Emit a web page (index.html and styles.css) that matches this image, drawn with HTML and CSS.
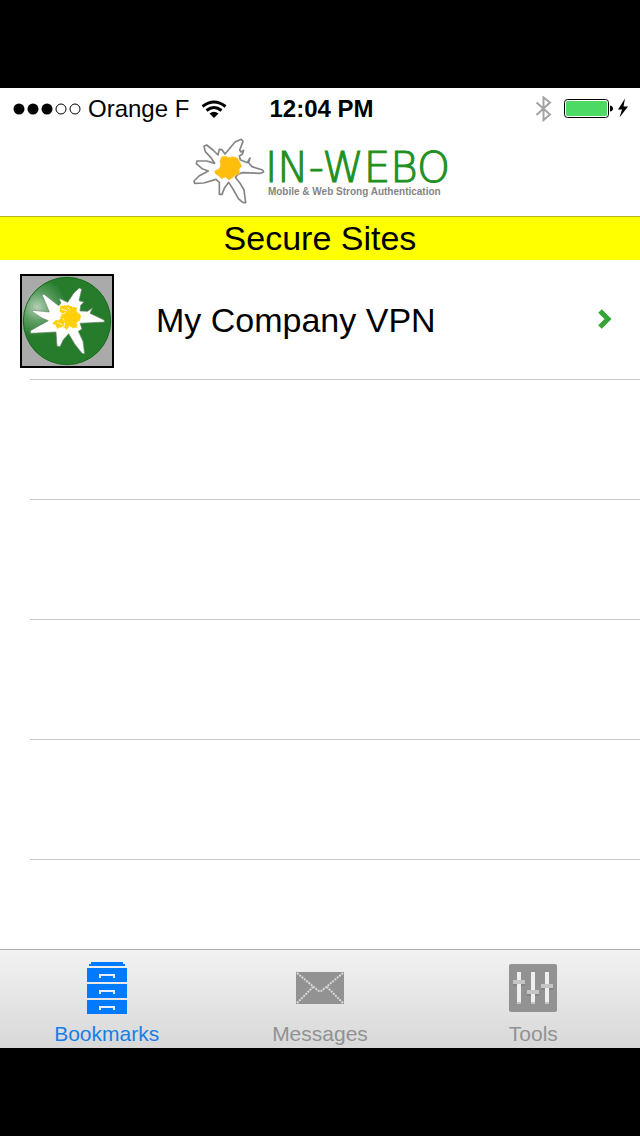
FILE: index.html
```html
<!DOCTYPE html>
<html lang="en">
<head>
<meta charset="utf-8">
<meta name="viewport" content="width=device-width">
<title>In-Webo Secure Sites</title>
<link rel="stylesheet" href="styles.css">
</head>
<body>
<div class="screen">
  <div class="status">
    <div class="carrier">
      <svg width="68" height="12" viewBox="0 0 68 12" aria-hidden="true">
        <circle cx="6" cy="6" r="5.5"/><circle cx="20" cy="6" r="5.5"/><circle cx="34" cy="6" r="5.5"/>
        <g fill="none" stroke="#000"><circle cx="48" cy="6" r="5"/><circle cx="62" cy="6" r="5"/></g>
      </svg>
      <span>Orange F</span>
      <svg class="wifi" width="26" height="20" viewBox="0 0 26 20" aria-hidden="true">
        <g fill="none" stroke="#000" stroke-width="3"><path d="M1.5 7.5Q13-1.5 24.5 7.5"/><path d="M5.5 11.5Q13 5.5 20.5 11.5"/></g>
        <path d="M8.5 14.5Q13 11 17.5 14.5L13 19Z"/>
      </svg>
    </div>
    <time class="clock">12:04 PM</time>
    <div class="power">
      <svg width="96" height="28" viewBox="534 95 96 28" aria-hidden="true">
        <path d="M536.5 102.500L550 114.500L543.5 120V97.500L550 102.500L536.5 115" fill="none" stroke="#a3a3a3" stroke-width="2"/>
        <rect x="564.500" y="99.500" width="44" height="18" rx="3" fill="#fff" stroke="#000"/>
        <rect x="566" y="101" width="41" height="15" rx="1.500" fill="#4cd964"/>
        <path d="M610 105.500Q613 106 613 108.500T610 111.500Z"/>
        <path d="M625 98.500L618 109.500H622L619.500 117.500L628 106.500H623.500Z"/>
      </svg>
    </div>
  </div>

  <header class="brand">
    <svg width="75" height="70" viewBox="15 18 225 210" aria-hidden="true">
      <path d="M99 75L103 58L111 59L120 72L130 60L150 36L169 28L174 34L164 60L168 66L176 61L172 73L163 78L166 89L187 98L195 84L191 98L201 110L233 120L236 126L227 130L174 128L160 132L151 142L164 158L177 180L182 218L173 217L160 206L144 177L131 157L119 173L111 193L103 193L103 157L93 148L56 159L29 160L27 153L42 138L70 123L51 116L34 101L36 93L65 93L89 100L77 82L61 65L57 49L65 45L84 60Z" fill="#fff" stroke="#858585" stroke-width="5" stroke-linejoin="round"/>
      <path d="M110 80L124 79L130 83L145 80L158 85L164 96L170 108L162 118L164 130L151 136L142 143L132 150L121 141L109 146L102 138L91 131L89 123L102 117L107 108L105 94Z" fill="#ffbd0c" stroke="#ffc83c" stroke-width="3" stroke-dasharray="5 2"/>
    </svg>
    <div class="brand-text">
      <span class="wordmark">IN-WEBO</span>
      <span class="tagline">Mobile &amp; Web Strong Authentication</span>
    </div>
  </header>

  <main class="content">
    <h1 class="title">Secure Sites</h1>
    <ul class="sites">
      <li class="row">
        <a class="site" href="#vpn">
          <svg class="badge" width="90" height="90" viewBox="66 48 270 270" aria-hidden="true">
            <defs>
              <radialGradient id="shine" cx=".16" cy=".34" r=".34">
                <stop offset="0" stop-color="#b4d0b5"/><stop offset=".5" stop-color="#5c9d62"/><stop offset="1" stop-color="#277c2c"/>
              </radialGradient>
            </defs>
            <circle cx="201" cy="183" r="131" fill="url(#shine)" stroke="#146a19" stroke-width="3"/>
            <path d="M177 115L190 121L203 127L222 98L238 84L245 88L237 122L252 126L242 136L240 153L263 154L278 143L270 160L312 180L314 186L240 190L246 207L235 214L249 244L254 282L246 280L224 252L206 221L190 239L180 260L171 258L168 216L92 220L91 212L145 182L126 174L97 155L100 151L148 156L126 104L132 103L176 137L183 130Z" fill="#fff" stroke="#66866a" stroke-width="2" stroke-linejoin="round"/>
            <path d="M181 139L205 136L218 142L230 143L229 155L242 166L239 181L229 187L231 202L218 203L207 196L201 209L189 199L171 205L169 195L158 191L166 182L180 180L186 161L180 154Z" fill="#ffcf08" stroke="#ffd21c" stroke-width="3" stroke-dasharray="7 3"/>
            <path d="M184 147L202 153M181 164L197 158M171 187L187 194M191 203L195 187M202 142L211 151M188 174L193 181" stroke="#fff7cb" stroke-width="3"/>
          </svg>
          <span class="name">My Company VPN</span>
          <svg class="chevron" width="14" height="20" viewBox="0 0 14 20" aria-hidden="true"><path d="M2 2L10 10L2 18" fill="none" stroke="#36a336" stroke-width="5"/></svg>
        </a>
      </li>
      <li class="row"></li>
      <li class="row"></li>
      <li class="row"></li>
      <li class="row"></li>
    </ul>
  </main>

  <nav class="tabs">
    <button class="tab active" type="button">
      <svg width="40" height="52" viewBox="0 0 40 52" aria-hidden="true">
        <path d="M4 0H36V2H38V4H2V2H4ZM0 6H40V20H0ZM0 22H40V36H0ZM0 38H40V52H0Z" fill="#007aff"/>
        <path d="M13 16V13H27V16M13 32V29H27V32M13 48V45H27V48" fill="none" stroke="#e8eef5" stroke-width="2"/>
      </svg>
      <span>Bookmarks</span>
    </button>
    <button class="tab" type="button">
      <svg width="48" height="52" viewBox="0 0 48 52" aria-hidden="true">
        <rect y="10" width="48" height="32" fill="#929292"/>
        <path d="M1 11L22 28.500Q24 30 26 28.500L47 11M1 41L17 25M47 41L31 25" fill="none" stroke="#d9d9d9" stroke-width="2" stroke-dasharray="2 1"/>
      </svg>
      <span>Messages</span>
    </button>
    <button class="tab" type="button">
      <svg width="48" height="52" viewBox="0 0 48 52" aria-hidden="true">
        <rect y="2" width="48" height="48" rx="2" fill="#929292"/>
        <path d="M8 10H12V40H8ZM22 10H26V40H22ZM36 10H40V40H36Z" fill="#efefef"/>
        <path d="M4 18H16V22H4ZM18 28H30V32H18ZM32 22H44V26H32ZM8 40H12V42H8ZM22 40H26V42H22ZM36 40H40V42H36Z" fill="#c5c5c5"/>
        <path d="M4 22H8V24H4ZM12 22H16V24H12ZM18 32H22V34H18ZM26 32H30V34H26ZM32 26H36V28H32ZM40 26H44V28H40Z" fill="#858585"/>
      </svg>
      <span>Tools</span>
    </button>
  </nav>
</div>
</body>
</html>
```
FILE: styles.css
```css
* {
  box-sizing: border-box;
}

body {
  margin: 0;
  padding: 88px 0;
  background: #000;
  color: #000;
  font-family: "Liberation Sans", Arial, sans-serif;
}

svg {
  display: block;
  flex: none;
}

.screen {
  display: flex;
  flex-direction: column;
  min-height: calc(100vh - 176px);
  background: #fff;
}

.status {
  display: grid;
  grid-template-columns: 1fr auto 1fr;
  align-items: center;
  height: 40px;
  padding: 2px 10px 0 13px;
  font-size: 24px;
  line-height: 28px;
}

.carrier {
  display: flex;
  align-items: center;
  gap: 7px;
}

.wifi {
  margin-left: 5px;
}

.clock {
  font-weight: bold;
}

.power {
  display: flex;
  justify-content: flex-end;
}

.brand {
  display: flex;
  justify-content: center;
  height: 88px;
  padding-top: 8px;
}

.brand-text {
  display: flex;
  flex-direction: column;
  padding-top: 14px;
  white-space: nowrap;
}

.wordmark {
  color: #209020;
  font-family: "DejaVu Sans", sans-serif;
  font-size: 42px;
  font-weight: 200;
  line-height: 36px;
  -webkit-text-stroke: 1px #209020;
}

.tagline {
  padding-left: 3px;
  color: #858585;
  font-size: 10px;
  font-weight: bold;
  line-height: 12px;
}

.content {
  flex: 1;
}

.title {
  margin: 0;
  border-top: 1px solid #b5b520;
  background: #ff0;
  font-size: 34px;
  font-weight: normal;
  line-height: 43px;
  text-align: center;
}

.sites {
  margin: 0;
  padding: 0;
  list-style: none;
}

.row {
  height: 120px;
  background: linear-gradient(#c8c7cc, #c8c7cc) right bottom / calc(100% - 30px) 1px no-repeat;
}

.site {
  display: flex;
  align-items: center;
  height: 100%;
  padding: 2px 28px 0 20px;
  color: inherit;
  text-decoration: none;
}

.badge {
  box-sizing: content-box;
  border: 2px solid #000;
  background: #aaa;
}

.name {
  flex: 1;
  padding: 0 0 2px 42px;
  font-size: 34px;
  line-height: 40px;
}

.chevron {
  margin-bottom: 4px;
}

.tabs {
  display: grid;
  grid-template-columns: repeat(3, 1fr);
  border-top: 1px solid #adadad;
  background: linear-gradient(#f2f2f2, #d8d8d8);
}

.tab {
  display: flex;
  flex-direction: column;
  align-items: center;
  gap: 8px;
  padding: 12px 0 2px;
  border: 0;
  background: none;
  color: #929292;
  font-family: inherit;
  font-size: 21px;
  line-height: 24px;
}

.active {
  color: #167fe8;
}
```
